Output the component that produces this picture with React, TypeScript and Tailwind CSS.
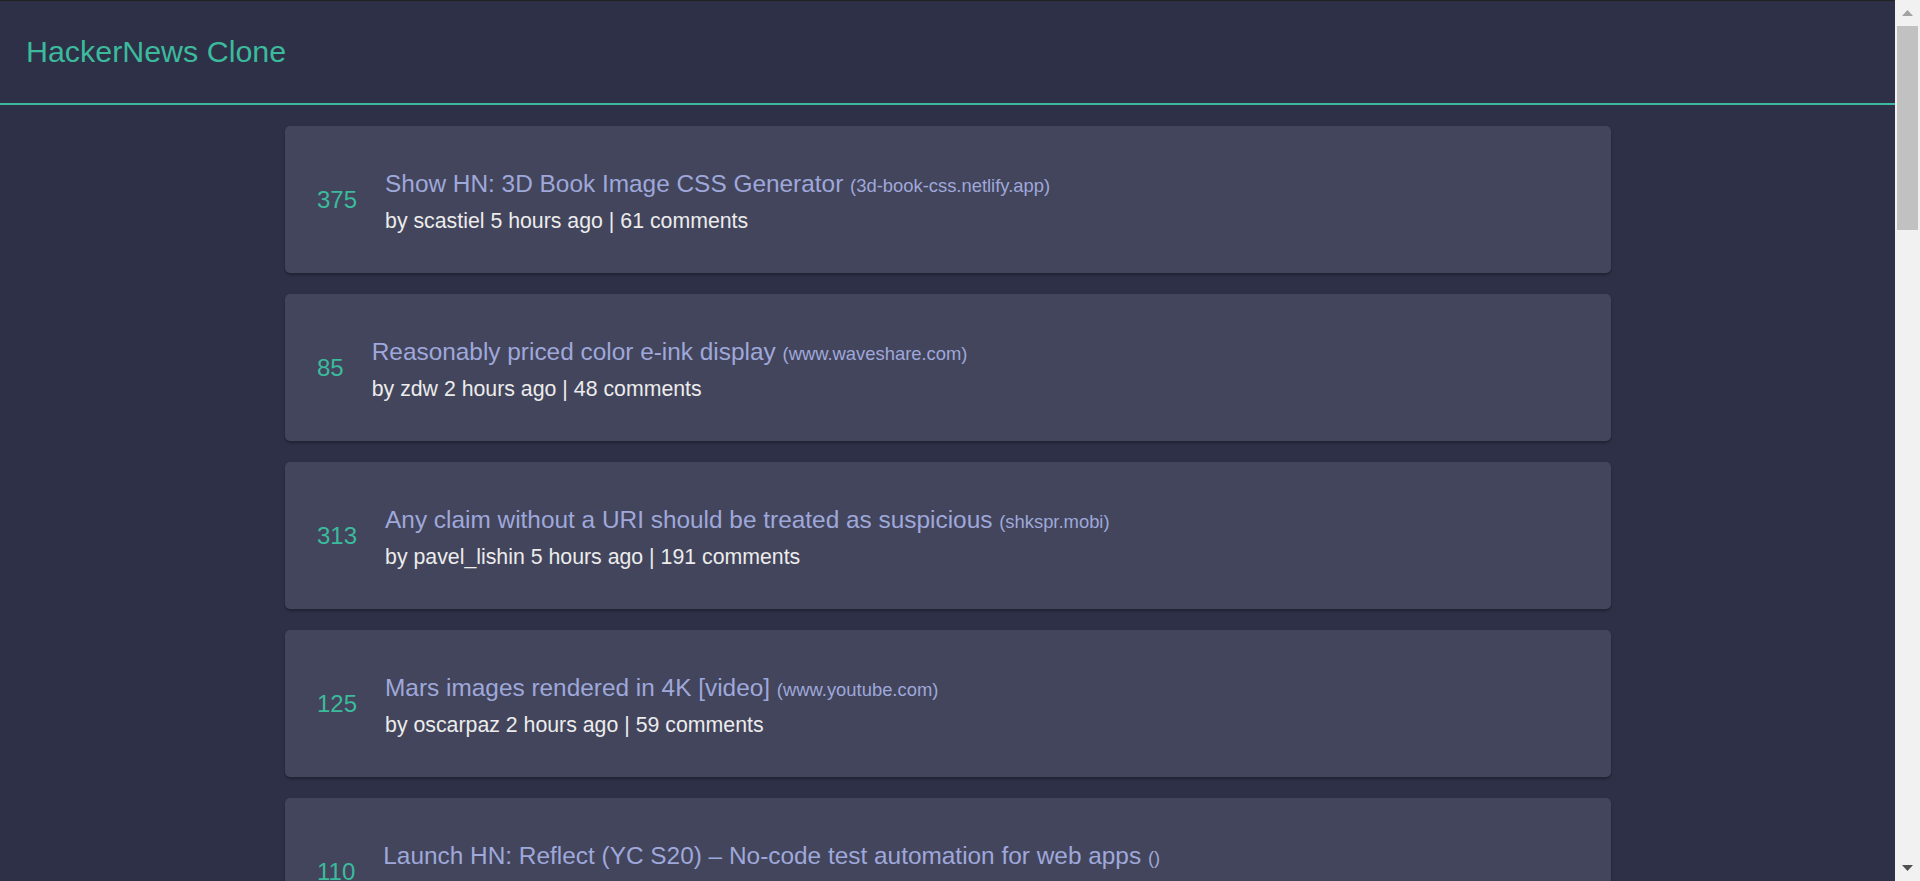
import React from 'react';

interface Story {
  id: number;
  score: number;
  title: string;
  domain: string;
  by: string;
  time: string;
  comments: number;
}

const stories: Story[] = [
  { id: 1, score: 375, title: 'Show HN: 3D Book Image CSS Generator', domain: '3d-book-css.netlify.app', by: 'scastiel', time: '5 hours ago', comments: 61 },
  { id: 2, score: 85, title: 'Reasonably priced color e-ink display', domain: 'www.waveshare.com', by: 'zdw', time: '2 hours ago', comments: 48 },
  { id: 3, score: 313, title: 'Any claim without a URI should be treated as suspicious', domain: 'shkspr.mobi', by: 'pavel_lishin', time: '5 hours ago', comments: 191 },
  { id: 4, score: 125, title: 'Mars images rendered in 4K [video]', domain: 'www.youtube.com', by: 'oscarpaz', time: '2 hours ago', comments: 59 },
  { id: 5, score: 110, title: 'Launch HN: Reflect (YC S20) – No-code test automation for web apps', domain: '', by: 'tmcneal', time: '6 hours ago', comments: 80 },
  { id: 6, score: 212, title: 'A visual guide to SSH tunnels', domain: 'robotmoon.com', by: 'ingve', time: '7 hours ago', comments: 34 },
  { id: 7, score: 64, title: 'The history of the floppy disk', domain: 'www.arstechnica.com', by: 'Tomte', time: '3 hours ago', comments: 22 },
];

const StoryCard: React.FC<{ story: Story }> = ({ story }) => (
  <div className="flex shrink-0 items-center h-[147px] pl-8 pr-6 bg-[#43455c] rounded-[5px] shadow-[0_2px_3px_rgba(0,0,0,0.3)]">
    <div className="text-[24px] leading-[28px] text-[#3bba9c] mr-[28px]">{story.score}</div>
    <div className="flex flex-col pt-[3px]">
      <div className="text-[24.4px] leading-[28px] text-[#9fa8da]">
        {story.title} <span className="text-[18.4px]">({story.domain})</span>
      </div>
      <div className="mt-[9px] text-[21.3px] leading-[24px] text-[#ececec]">
        by {story.by} {story.time} | {story.comments} comments
      </div>
    </div>
  </div>
);

// fake browser scrollbar, the reference shows one on the right
const Scrollbar: React.FC = () => (
  <div className="flex flex-col w-[25px] shrink-0 bg-[#f1f1f1]">
    <div className="flex items-center justify-center h-[26px]">
      <svg width="11" height="6" viewBox="0 0 11 6">
        <polygon points="5.5,0 11,6 0,6" fill="#a3a3a3" />
      </svg>
    </div>
    <div className="h-[204px] mx-[2px] bg-[#c1c1c1]" />
    <div className="flex-1" />
    <div className="flex items-center justify-center h-[26px]">
      <svg width="11" height="6" viewBox="0 0 11 6">
        <polygon points="0,0 11,0 5.5,6" fill="#505050" />
      </svg>
    </div>
  </div>
);

export default function App() {
  return (
    <div className="flex h-screen overflow-hidden bg-[#2e3047] font-['Liberation_Sans',Arial,sans-serif]">
      <div className="flex flex-col flex-1 min-w-0 overflow-hidden">
        <header className="flex shrink-0 items-center h-[105px] pl-[26px] pb-[2px] border-t border-[#222222] border-b-2 border-b-[#3bba9c]">
          <h1 className="text-[30.4px] leading-[34px] text-[#3bba9c] font-normal">HackerNews Clone</h1>
        </header>
        <main className="flex flex-col gap-[21px] pt-[21px] pb-[21px] pl-[285px] pr-[284px]">
          {stories.map((s) => (
            <StoryCard key={s.id} story={s} />
          ))}
        </main>
      </div>
      <Scrollbar />
    </div>
  );
}
